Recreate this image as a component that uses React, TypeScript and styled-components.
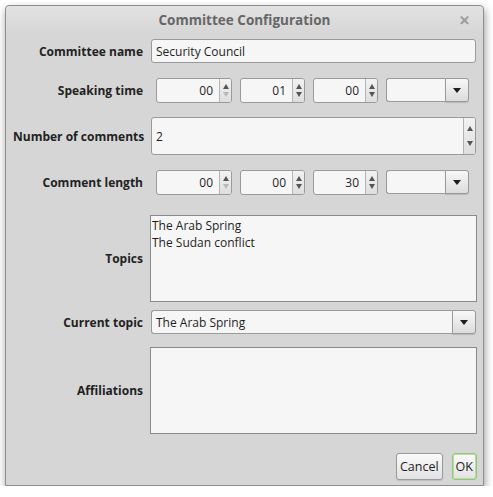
import React from "react";
import styled, { createGlobalStyle } from "styled-components";

const GlobalStyle = createGlobalStyle`
  html, body { margin: 0; padding: 0; background: #ffffff; }
  body { font-family: "Open Sans", "Noto Sans", "DejaVu Sans", sans-serif; font-size: 12px; color: #1e1e1e; }
  * { box-sizing: border-box; }
`;

const Window = styled.div`
  margin: 5px 0 0 5px;
  width: 479px;
  height: 481px;
  background: #d6d6d6;
  border: 1px solid #8e8e8e;
  border-radius: 4px 4px 0 0;
  box-shadow: 1px 4px 8px rgba(0, 0, 0, 0.4);
  display: flex;
  flex-direction: column;
`;

const TitleBar = styled.div`
  height: 28px;
  flex: none;
  display: flex;
  align-items: center;
  justify-content: center;
  position: relative;
  background: linear-gradient(#e2e2e2, #d6d6d6);
  border-radius: 4px 4px 0 0;
`;

const Title = styled.div`
  font-size: 13.5px;
  font-weight: 700;
  color: #666666;
`;

const Close = styled.div`
  position: absolute;
  right: 13px;
  top: 5px;
  font-size: 13px;
  font-weight: 700;
  color: #9a9a9a;
  -webkit-text-stroke: 0.6px #9a9a9a;
`;

const Form = styled.div`
  display: flex;
  flex-direction: column;
  padding: 5px 6px 0 7px;
`;

const Row = styled.div<{ $mt: number; $h: number }>`
  display: grid;
  grid-template-columns: 130px 1fr;
  column-gap: 7px;
  align-items: center;
  margin-top: ${(p) => p.$mt}px;
  height: ${(p) => p.$h}px;
`;

const Label = styled.div`
  font-weight: 700;
  text-align: right;
  color: #222222;
  white-space: nowrap;
`;

const TextField = styled.input`
  height: 24px;
  margin-left: 1px;
  width: calc(100% - 2px);
  border: 1px solid #9a9a9a;
  border-radius: 3px;
  background: #f6f6f6;
  font: inherit;
  color: #1e1e1e;
  padding: 0 4px;
  outline: none;
`;

const TimeGroup = styled.div`
  display: flex;
  gap: 8px;
  padding-left: 6px;
  height: 25px;
`;

const Spin = styled.div<{ $w: number; $h?: number }>`
  width: ${(p) => p.$w}px;
  height: ${(p) => p.$h ?? 25}px;
  display: flex;
  border: 1px solid #9a9a9a;
  border-radius: 3px;
  background: #f6f6f6;
  overflow: hidden;
`;

const SpinValue = styled.div<{ $align: string }>`
  flex: 1;
  display: flex;
  align-items: center;
  justify-content: ${(p) => p.$align};
  padding: 0 6px 0 4px;
  color: #1e1e1e;
`;

const SpinButtons = styled.div`
  width: 12px;
  flex: none;
  display: flex;
  flex-direction: column;
  justify-content: space-around;
  align-items: center;
  padding: 3px 0;
  border-left: 1px solid #b4b4b4;
  background: linear-gradient(#f2f2f2, #dedede);
`;

const ArrowUp = styled.span<{ $off?: boolean }>`
  width: 0;
  height: 0;
  border-left: 3px solid transparent;
  border-right: 3px solid transparent;
  border-bottom: 5px solid ${(p) => (p.$off ? "#b8b8b8" : "#555555")};
`;

const ArrowDown = styled.span<{ $off?: boolean }>`
  width: 0;
  height: 0;
  border-left: 3px solid transparent;
  border-right: 3px solid transparent;
  border-top: 5px solid ${(p) => (p.$off ? "#b8b8b8" : "#555555")};
`;

const Combo = styled.div<{ $w?: number }>`
  width: ${(p) => (p.$w ? `${p.$w}px` : "calc(100% - 2px)")};
  margin-left: ${(p) => (p.$w ? 0 : 1)}px;
  height: 24px;
  display: flex;
`;

const ComboField = styled.div`
  flex: 1;
  border: 1px solid #9a9a9a;
  border-right: none;
  border-radius: 3px 0 0 3px;
  background: #f6f6f6;
  display: flex;
  align-items: center;
  padding: 0 4px;
`;

const ComboButton = styled.div`
  width: 24px;
  flex: none;
  border: 1px solid #9a9a9a;
  border-radius: 0 3px 3px 0;
  background: linear-gradient(#f7f7f7, #dcdcdc);
  display: flex;
  align-items: center;
  justify-content: center;
  box-shadow: 0 1px 1px rgba(0, 0, 0, 0.15);
`;

const ComboArrow = styled.span`
  width: 0;
  height: 0;
  border-left: 4px solid transparent;
  border-right: 4px solid transparent;
  border-top: 5px solid #1e1e1e;
`;

const ListBox = styled.div<{ $h: number }>`
  height: ${(p) => p.$h}px;
  border: 1px solid #8a8a8a;
  background: #f6f6f6;
  padding: 1px 0 0 1px;
  display: flex;
  flex-direction: column;
`;

const ListItem = styled.div`
  line-height: 17px;
  color: #1e1e1e;
`;

const ButtonBar = styled.div`
  display: flex;
  justify-content: flex-end;
  gap: 9px;
  margin-top: 19px;
`;

const Button = styled.div<{ $default?: boolean }>`
  height: 27px;
  padding: 0 3px;
  display: flex;
  align-items: center;
  border: 1px solid ${(p) => (p.$default ? "#95c77a" : "#9a9a9a")};
  box-shadow: ${(p) => (p.$default ? "inset 0 0 0 1px #b6dca0" : "0 1px 1px rgba(0,0,0,0.12)")};
  border-radius: 3px;
  background: linear-gradient(#fafafa, #e2e2e2);
  color: #1e1e1e;
  font-size: 12.5px;
`;

type SpinProps = { value: string; w: number; downOff?: boolean };

const SpinBox = ({ value, w, downOff }: SpinProps) => (
  <Spin $w={w}>
    <SpinValue $align="flex-end">{value}</SpinValue>
    <SpinButtons>
      <ArrowUp />
      <ArrowDown $off={downOff} />
    </SpinButtons>
  </Spin>
);

const TimeRow = ({ h, m, s }: { h: string; m: string; s: string }) => (
  <TimeGroup>
    <SpinBox value={h} w={76} downOff />
    <SpinBox value={m} w={65} />
    <SpinBox value={s} w={65} />
    <Combo $w={83}>
      <ComboField />
      <ComboButton>
        <ComboArrow />
      </ComboButton>
    </Combo>
  </TimeGroup>
);

export default function App() {
  return (
    <>
      <GlobalStyle />
      <Window>
        <TitleBar>
          <Title>Committee Configuration</Title>
          <Close>✕</Close>
        </TitleBar>
        <Form>
          <Row $mt={0} $h={24}>
            <Label>Committee name</Label>
            <TextField readOnly value="Security Council" />
          </Row>
          <Row $mt={15} $h={24}>
            <Label>Speaking time</Label>
            <TimeRow h="00" m="01" s="00" />
          </Row>
          <Row $mt={15} $h={38}>
            <Label>Number of comments</Label>
            <Spin $w={325} $h={38} style={{ marginLeft: 1 }}>
              <SpinValue $align="flex-start">2</SpinValue>
              <SpinButtons>
                <ArrowUp />
                <ArrowDown />
              </SpinButtons>
            </Spin>
          </Row>
          <Row $mt={15} $h={24}>
            <Label>Comment length</Label>
            <TimeRow h="00" m="00" s="30" />
          </Row>
          <Row $mt={21} $h={87}>
            <Label>Topics</Label>
            <ListBox $h={87}>
              <ListItem>The Arab Spring</ListItem>
              <ListItem>The Sudan conflict</ListItem>
            </ListBox>
          </Row>
          <Row $mt={8} $h={24}>
            <Label>Current topic</Label>
            <Combo>
              <ComboField>The Arab Spring</ComboField>
              <ComboButton>
                <ComboArrow />
              </ComboButton>
            </Combo>
          </Row>
          <Row $mt={13} $h={87}>
            <Label>Affiliations</Label>
            <ListBox $h={87} />
          </Row>
          <ButtonBar>
            <Button>Cancel</Button>
            <Button $default>OK</Button>
          </ButtonBar>
        </Form>
      </Window>
    </>
  );
}
